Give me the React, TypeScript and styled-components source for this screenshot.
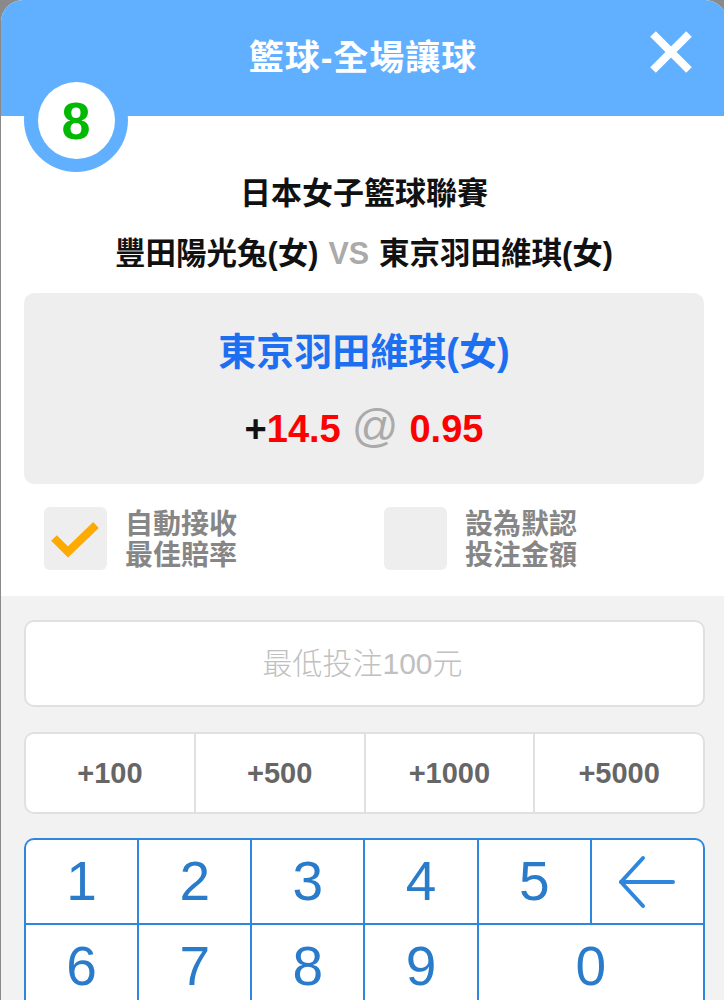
import React from "react";
import styled, { createGlobalStyle } from "styled-components";

const Global = createGlobalStyle`
  html, body {
    margin: 0;
    padding: 0;
    background: #8a8a8a;
    overflow: hidden;
  }
  * { box-sizing: border-box; }
  body {
    font-family: "Liberation Sans", "Noto Sans CJK TC", sans-serif;
  }
`;

const Modal = styled.div`
  position: relative;
  margin-left: 1px;
  width: 726px;
  height: 1000px;
  background: #fff;
  border-radius: 22px 22px 0 0;
  overflow: hidden;
  display: flex;
  flex-direction: column;
`;

const Header = styled.div`
  position: relative;
  height: 116px;
  flex: none;
  background: #61b0ff;
  display: flex;
  align-items: center;
  justify-content: center;
  padding-right: 2px;
`;

const Title = styled.h1`
  margin: 0;
  color: #fff;
  font-family: "Liberation Sans", "Noto Sans CJK TC", sans-serif;
  font-size: 35px;
  font-weight: 700;
  line-height: 40px;
  letter-spacing: 1px;
`;

const CloseButton = styled.button`
  position: absolute;
  left: 649px;
  top: 31px;
  width: 42px;
  height: 42px;
  padding: 0;
  border: none;
  background: transparent;
  display: block;
`;

const Badge = styled.div`
  position: absolute;
  left: 23px;
  top: 68px;
  width: 104px;
  height: 104px;
  border-radius: 50%;
  background: #61b0ff;
  display: flex;
  align-items: center;
  justify-content: center;
  z-index: 2;
`;

const BadgeInner = styled.div`
  width: 77px;
  height: 77px;
  border-radius: 50%;
  background: #fff;
  display: flex;
  align-items: center;
  justify-content: center;
  color: #00b900;
  font-family: "Liberation Sans", sans-serif;
  font-weight: 700;
  font-size: 52px;
  line-height: 1;
  padding-top: 2px;
`;

const Info = styled.section`
  padding: 58px 23px 26px;
  display: flex;
  flex-direction: column;
  align-items: stretch;
`;

const League = styled.div`
  text-align: center;
  font-size: 31px;
  font-weight: 700;
  line-height: 40px;
  color: #111;
`;

const Teams = styled.div`
  margin-top: 19px;
  text-align: center;
  font-size: 30.5px;
  font-weight: 700;
  line-height: 40px;
  color: #111;
`;

const Vs = styled.span`
  color: #aaa;
  font-family: "Liberation Sans", sans-serif;
  margin: 0 10px;
`;

const BetCard = styled.div`
  margin-top: 20px;
  height: 191px;
  background: #eeeeee;
  border-radius: 10px;
  display: flex;
  flex-direction: column;
  align-items: center;
  padding-top: 34px;
`;

const Selection = styled.div`
  color: #1d6ff2;
  font-size: 38px;
  font-weight: 700;
  line-height: 50px;
`;

const Odds = styled.div`
  margin-top: 24px;
  font-family: "Liberation Sans", sans-serif;
  font-weight: 700;
  font-size: 38px;
  line-height: 50px;
  display: flex;
  align-items: baseline;
  gap: 11px;
`;

const OddsPart = styled.span<{ $color: string }>`
  color: ${(p) => p.$color};
`;

const At = styled.span`
  color: #aaa;
  font-weight: 400;
  font-size: 46px;
`;

const Options = styled.div`
  margin-top: 23px;
  display: grid;
  grid-template-columns: 1fr 1fr;
`;

const Option = styled.label`
  display: flex;
  align-items: center;
  gap: 18px;
  padding-left: 20px;
`;

const Box = styled.span`
  width: 63px;
  height: 63px;
  border-radius: 6px;
  background: #eeeeee;
  display: flex;
  align-items: center;
  justify-content: center;
  flex: none;
`;

const OptionText = styled.span`
  color: #868686;
  font-size: 28px;
  font-weight: 700;
  line-height: 31px;
  position: relative;
  top: 1px;
`;

const Entry = styled.section`
  flex: 1;
  background: #f2f2f2;
  padding: 24px 22px 0 23px;
  display: flex;
  flex-direction: column;
  gap: 25px;
`;

const AmountInput = styled.div`
  height: 87px;
  border: 2px solid #e0e0e0;
  border-radius: 10px;
  background: #fff;
  display: flex;
  align-items: center;
  justify-content: center;
  color: #c0c0c0;
  font-size: 30px;
  font-weight: 300;
  padding: 0 4px 6px 0;
`;

const QuickRow = styled.div`
  height: 82px;
  display: grid;
  grid-template-columns: repeat(4, 1fr);
  gap: 2px;
  background: #e0e0e0;
  border: 2px solid #e0e0e0;
  border-radius: 10px;
  overflow: hidden;
`;

const QuickCell = styled.div`
  background: #fff;
  display: flex;
  align-items: center;
  justify-content: center;
  color: #666;
  font-family: "Liberation Sans", sans-serif;
  font-weight: 700;
  font-size: 29px;
`;

const Keypad = styled.div`
  margin-top: -1px;
  display: grid;
  grid-template-columns: repeat(6, 1fr);
  grid-auto-rows: 83px;
  gap: 2px;
  background: #2f86dd;
  border: 2px solid #2f86dd;
  border-radius: 10px 10px 0 0;
  overflow: hidden;
`;

const Key = styled.div<{ $span?: number }>`
  grid-column: span ${(p) => p.$span ?? 1};
  background: #fff;
  display: flex;
  align-items: center;
  justify-content: center;
  color: #2a7cca;
  font-family: "Liberation Sans", sans-serif;
  font-size: 55px;
  line-height: 1;
`;

const CheckIcon = () => (
  <svg width="63" height="63" viewBox="0 0 63 63">
    <polyline
      points="10,31 24,45 52,18"
      fill="none"
      stroke="#ffaa00"
      strokeWidth="8"
      strokeLinecap="butt"
      strokeLinejoin="miter"
    />
  </svg>
);

const CloseIcon = () => (
  <svg width="42" height="42" viewBox="0 0 42 42">
    <line x1="3" y1="3" x2="39" y2="39" stroke="#fff" strokeWidth="8" />
    <line x1="39" y1="3" x2="3" y2="39" stroke="#fff" strokeWidth="8" />
  </svg>
);

const BackArrow = () => (
  <svg width="60" height="54" viewBox="0 0 60 54">
    <g fill="none" stroke="#2f86dd" strokeWidth="4" strokeLinecap="round" strokeLinejoin="round">
      <line x1="4" y1="27" x2="56" y2="27" />
      <polyline points="26,3 4,27 26,51" />
    </g>
  </svg>
);

export default function App() {
  return (
    <>
      <Global />
      <Modal>
        <Header>
          <Title>籃球-全場讓球</Title>
          <CloseButton aria-label="close">
            <CloseIcon />
          </CloseButton>
        </Header>
        <Badge>
          <BadgeInner>8</BadgeInner>
        </Badge>
        <Info>
          <League>日本女子籃球聯賽</League>
          <Teams>
            豐田陽光兔(女)<Vs>VS</Vs>東京羽田維琪(女)
          </Teams>
          <BetCard>
            <Selection>東京羽田維琪(女)</Selection>
            <Odds>
              <span>
                <OddsPart $color="#111">+</OddsPart>
                <OddsPart $color="#ff0000">14.5</OddsPart>
              </span>
              <At>@</At>
              <OddsPart $color="#ff0000">0.95</OddsPart>
            </Odds>
          </BetCard>
          <Options>
            <Option>
              <Box>
                <CheckIcon />
              </Box>
              <OptionText>
                自動接收
                <br />
                最佳賠率
              </OptionText>
            </Option>
            <Option>
              <Box />
              <OptionText>
                設為默認
                <br />
                投注金額
              </OptionText>
            </Option>
          </Options>
        </Info>
        <Entry>
          <AmountInput>最低投注100元</AmountInput>
          <QuickRow>
            {["+100", "+500", "+1000", "+5000"].map((v) => (
              <QuickCell key={v}>{v}</QuickCell>
            ))}
          </QuickRow>
          <Keypad>
            {["1", "2", "3", "4", "5"].map((k) => (
              <Key key={k}>{k}</Key>
            ))}
            <Key>
              <BackArrow />
            </Key>
            {["6", "7", "8", "9"].map((k) => (
              <Key key={k}>{k}</Key>
            ))}
            <Key $span={2}>0</Key>
          </Keypad>
        </Entry>
      </Modal>
    </>
  );
}
